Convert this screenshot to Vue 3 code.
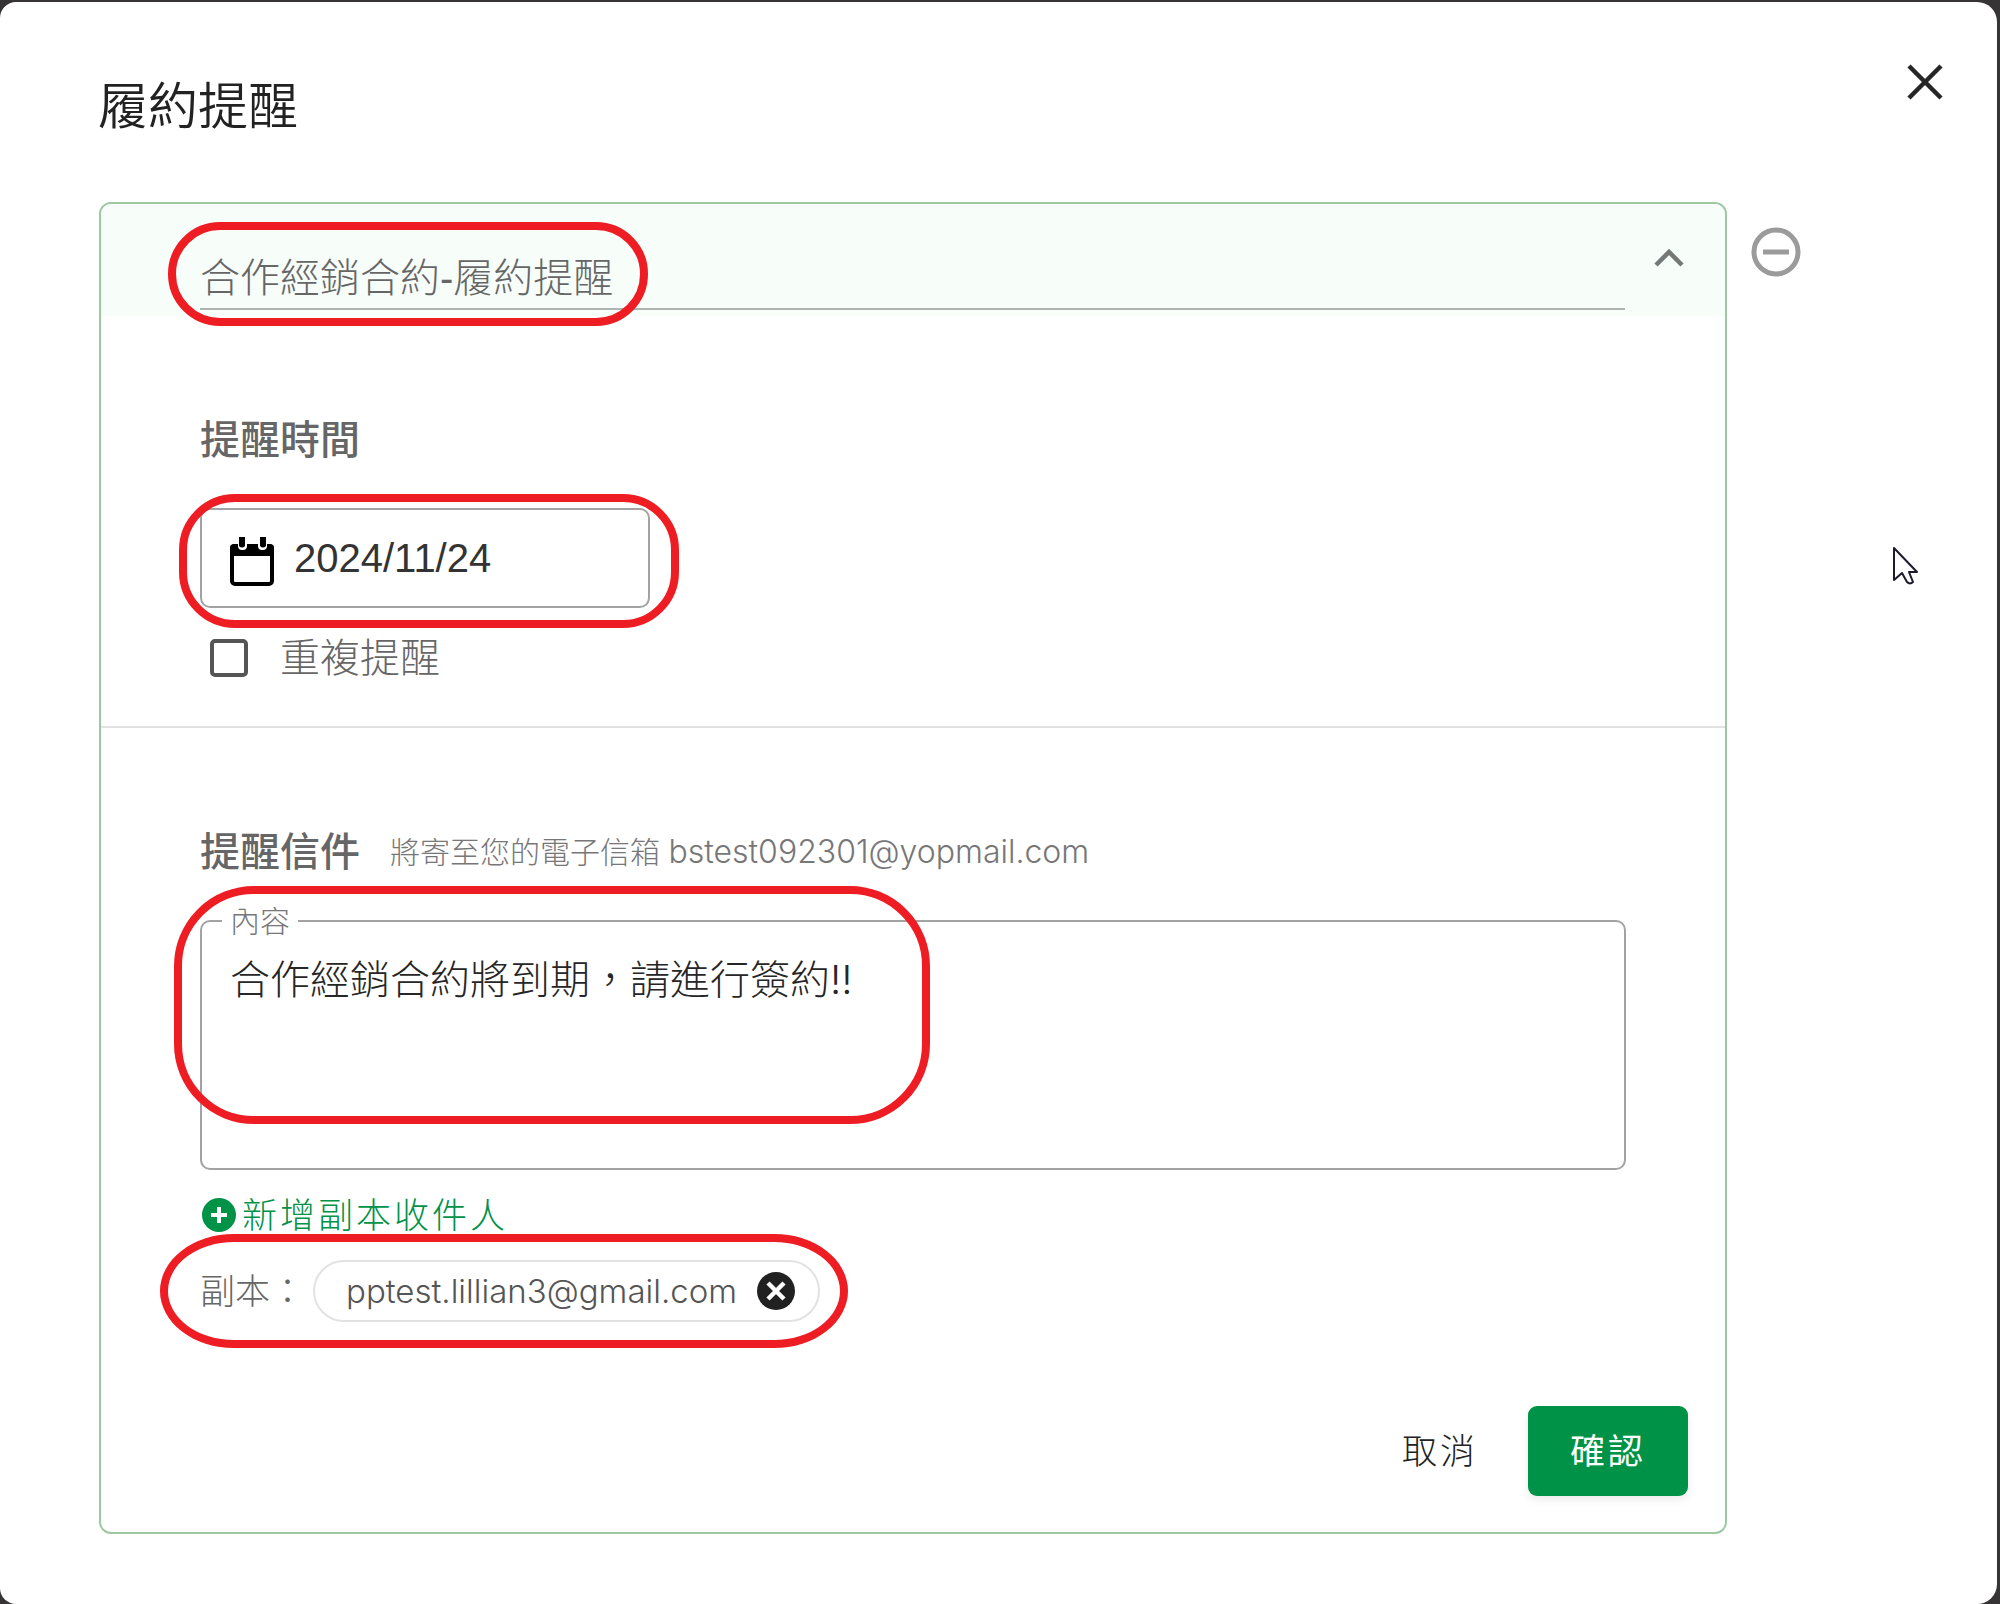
<script setup>
import { ref } from 'vue'

const title = ref('合作經銷合約-履約提醒')
const date = ref('2024/11/24')
const repeat = ref(false)
const content = ref('合作經銷合約將到期，請進行簽約!!')
const recipients = ref(['pptest.lillian3@gmail.com'])
</script>

<template>
  <div class="dialog" role="dialog" aria-labelledby="dialog-title">
    <header class="dialog-head">
      <h1 id="dialog-title">履約提醒</h1>
      <button class="icon-btn close" type="button" aria-label="關閉">
        <svg width="56" height="56" viewBox="0 0 56 56">
          <path d="M12 12 44 44M44 12 12 44" fill="none" stroke="#262626" stroke-width="4.5" />
        </svg>
      </button>
    </header>

    <main class="dialog-body">
      <form class="card" @submit.prevent>
        <div class="card-head">
          <div class="title-field">
            <input v-model="title" type="text" aria-label="提醒名稱" />
            <span class="ring ring-title"></span>
          </div>
          <button class="icon-btn toggle" type="button" aria-label="收合">
            <svg width="40" height="40" viewBox="0 0 40 40">
              <path d="M7 27 20 14 33 27" fill="none" stroke="#757877" stroke-width="4.5" />
            </svg>
          </button>
        </div>

        <section class="block">
          <h2><label for="date">提醒時間</label></h2>
          <div class="date-field">
            <svg width="46" height="50" viewBox="0 0 46 50">
              <rect x="2" y="9" width="40" height="38" rx="3" fill="none" stroke="#000" stroke-width="4" />
              <path d="M0 11q0-4 4-4h36q4 0 4 4v8H0z" fill="#000" />
              <path d="M8 6h9v3q0 4-4 4h-1q-4 0-4-4zM28 6h9v3q0 4-4 4h-1q-4 0-4-4z" fill="#fff" />
              <path d="M9 0h6v9q-3 3-6 0zM30 0h6v9q-3 3-6 0z" fill="#000" />
            </svg>
            <input id="date" v-model="date" type="text" />
            <span class="ring ring-date"></span>
          </div>
          <div class="check-row">
            <input id="repeat" v-model="repeat" type="checkbox" />
            <label for="repeat">重複提醒</label>
          </div>
        </section>

        <section class="block mail">
          <div class="mail-head">
            <h2>提醒信件</h2>
            <p>將寄至您的電子信箱 <span class="address">bstest092301@yopmail.com</span></p>
          </div>
          <div class="content-wrap">
            <fieldset class="content-field">
              <legend><label for="content">內容</label></legend>
              <textarea id="content" v-model="content"></textarea>
            </fieldset>
            <span class="ring ring-content"></span>
          </div>
          <button class="text-btn add" type="button">
            <svg width="34" height="34" viewBox="0 0 34 34">
              <circle cx="17" cy="17" r="17" fill="#009247" />
              <path d="M17 9v16M9 17h16" stroke="#fff" stroke-width="4" />
            </svg>
            新增副本收件人
          </button>
          <div class="cc-row">
            <span class="cc-label">副本：</span>
            <span v-for="mail in recipients" :key="mail" class="chip">
              {{ mail }}
              <button class="icon-btn" type="button" aria-label="移除">
                <svg width="38" height="38" viewBox="0 0 38 38">
                  <circle cx="19" cy="19" r="19" fill="#212121" />
                  <path d="M11 11 27 27M27 11 11 27" stroke="#fff" stroke-width="4.5" />
                </svg>
              </button>
            </span>
            <span class="ring ring-cc"></span>
          </div>
        </section>

        <footer class="actions">
          <button class="text-btn cancel" type="button">取消</button>
          <button class="text-btn confirm" type="submit">確認</button>
        </footer>
      </form>

      <button class="icon-btn remove" type="button" aria-label="刪除提醒">
        <svg width="50" height="50" viewBox="0 0 50 50">
          <circle cx="25" cy="25" r="22" fill="none" stroke="#9b9b9b" stroke-width="5" />
          <path d="M12 25h26" stroke="#9b9b9b" stroke-width="5" />
        </svg>
      </button>
    </main>

    <svg class="pointer" width="28" height="42" viewBox="0 0 28 42">
      <path
        d="M2 2v32l8-7 5 9q3 3 6 0l-4-10h8z"
        fill="#fff"
        stroke="#1c1a2c"
        stroke-width="2"
        stroke-linejoin="round"
      />
    </svg>
  </div>
</template>

<style>
html {
  background: #363435;
}
</style>

<style scoped>
.dialog,
.dialog * {
  box-sizing: border-box;
}

.dialog {
  position: relative;
  margin: 2px 3px 2px 0;
  border-radius: 16px 20px 20px 16px;
  background: #fff;
  color: #666;
  font-family: Inter, 'Noto Sans CJK TC', sans-serif;
  font-size: 40px;
  font-weight: 300;
  line-height: 60px;
}

h1,
h2,
p {
  margin: 0;
}

input,
textarea,
button {
  margin: 0;
  padding: 0;
  border: 0;
  background: none;
  color: inherit;
  font: inherit;
  outline: 0;
}

svg {
  display: block;
  flex: none;
}

.icon-btn {
  flex: none;
  cursor: pointer;
}

.dialog-head {
  display: flex;
  justify-content: space-between;
  align-items: flex-start;
  padding: 52px 44px 60px 98px;
}

.dialog-head h1 {
  margin-top: 16px;
  color: #222;
  font-size: 50px;
  font-weight: 350;
  line-height: 72px;
}

.dialog-body {
  display: flex;
  align-items: flex-start;
  padding: 0 196px 70px 99px;
}

.card {
  flex: 1;
  min-width: 0;
  border: 2px solid #9dc8a2;
  border-radius: 12px;
}

.remove {
  margin: 25px 0 0 24px;
}

.card-head {
  display: flex;
  align-items: flex-start;
  padding: 42px 36px 6px 99px;
  border-radius: 10px 10px 0 0;
  background: #f7fdf9;
}

.title-field {
  position: relative;
  flex: 1;
  border-bottom: 2px solid #b0b4b1;
}

.title-field input {
  display: block;
  width: 100%;
  height: 62px;
  padding-bottom: 4px;
  font-family: 'Liberation Sans', 'Noto Sans CJK TC', sans-serif;
}

.toggle {
  margin: -8px 0 0 24px;
}

.block {
  padding: 94px 99px 38px;
  border-bottom: 2px solid #e2e2e2;
}

.block.mail {
  padding-bottom: 0;
  border-bottom: 0;
}

h2 {
  font-size: 40px;
  font-weight: 500;
  line-height: 60px;
}

.date-field {
  position: relative;
  display: flex;
  align-items: center;
  gap: 18px;
  width: 450px;
  height: 100px;
  margin-top: 38px;
  padding: 0 28px;
  border: 2px solid #a3a3a3;
  border-radius: 10px;
}

.date-field svg {
  margin-top: 8px;
}

.date-field input {
  width: 100%;
  min-width: 0;
  color: #333;
  font-family: 'Liberation Sans', sans-serif;
}

.check-row {
  display: flex;
  align-items: center;
  gap: 32px;
  margin-top: 20px;
  padding-left: 10px;
}

.check-row input {
  width: 38px;
  height: 38px;
  border: 4px solid #555;
  border-radius: 5px;
  appearance: none;
}

.mail-head {
  display: flex;
  align-items: center;
  gap: 30px;
}

.mail-head p {
  color: #777;
  font-size: 30px;
}

.address {
  font-size: 32px;
}

.content-wrap {
  position: relative;
  margin-top: 20px;
}

.content-field {
  min-width: 0;
  margin: 0;
  padding: 0 30px 10px 28px;
  border: 2px solid #a3a3a3;
  border-radius: 10px;
}

.content-field legend {
  margin-left: -8px;
  padding: 0 8px;
  color: #777;
  font-size: 30px;
  line-height: 38px;
}

.content-field textarea {
  display: block;
  width: 100%;
  height: 218px;
  padding-top: 10px;
  color: #262626;
  resize: none;
}

.text-btn {
  font-size: 35px;
  letter-spacing: 3px;
  cursor: pointer;
}

.add {
  display: flex;
  align-items: center;
  gap: 6px;
  height: 50px;
  margin: 20px 0 20px 2px;
  color: #009247;
  line-height: 50px;
}

.cc-row {
  position: relative;
  display: flex;
  align-items: center;
  gap: 8px;
  font-size: 35px;
}

.chip {
  display: flex;
  align-items: center;
  gap: 20px;
  height: 62px;
  padding: 0 23px 0 31px;
  border: 2px solid #e2e2e2;
  border-radius: 31px;
  color: #555;
  font-size: 33px;
}

.actions {
  display: flex;
  justify-content: flex-end;
  gap: 50px;
  padding: 84px 37px 36px;
}

.cancel {
  color: #222;
}

.confirm {
  width: 160px;
  height: 90px;
  border-radius: 9px;
  background: #009247;
  color: #fff;
  font-weight: 400;
  box-shadow: 0 4px 8px rgba(0, 0, 0, 0.08);
}

/* Highlight outlines laid over the fields */
.ring {
  position: absolute;
  border: 8px solid #ee1c23;
  pointer-events: none;
}

.ring-title {
  top: -24px;
  left: -32px;
  width: 480px;
  height: 104px;
  border-radius: 52px;
}

.ring-date {
  top: -16px;
  left: -23px;
  width: 500px;
  height: 134px;
  border-radius: 56px;
}

.ring-content {
  top: -16px;
  left: -26px;
  width: 756px;
  height: 238px;
  border-radius: 80px;
}

.ring-cc {
  top: -26px;
  left: -40px;
  width: 688px;
  height: 114px;
  border-radius: 74px / 57px;
}

.pointer {
  position: absolute;
  top: 544px;
  right: 77px;
}
</style>
